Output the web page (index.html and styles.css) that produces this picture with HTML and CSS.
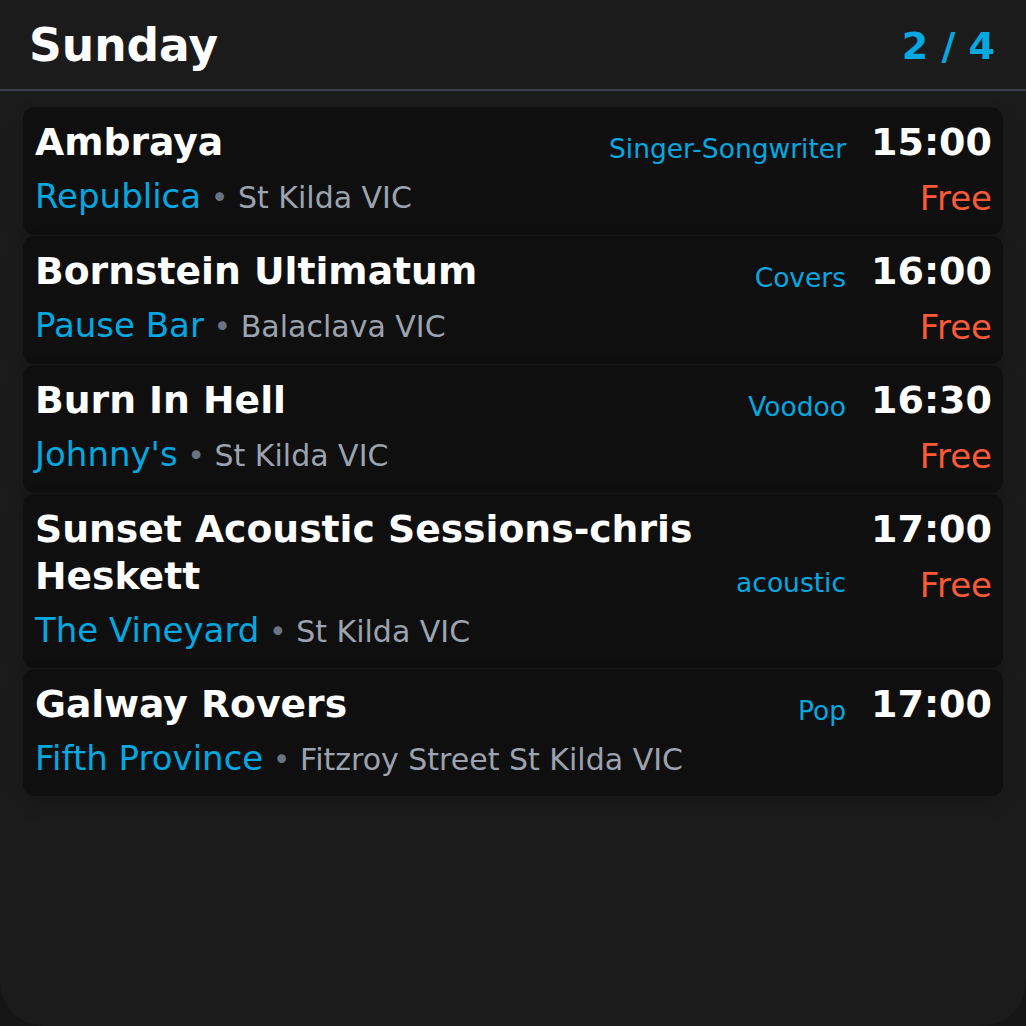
FILE: index.html
```html
<!DOCTYPE html>
<html lang="en">
<head>
<meta charset="utf-8">
<title>Sunday</title>
<link rel="stylesheet" href="styles.css">
</head>
<body>
<div class="panel">
  <header class="head">
    <h1 class="day">Sunday</h1>
    <div class="count">2 / 4</div>
  </header>
  <div class="list">
    <div class="card">
      <div class="main">
        <div class="top"><div class="title">Ambraya</div><div class="genre">Singer-Songwriter</div></div>
        <div class="venue"><span class="vname">Republica</span> <span class="dot">•</span> <span class="loc">St Kilda VIC</span></div>
      </div>
      <div class="side"><div class="time">15:00</div><div class="price">Free</div></div>
    </div>
    <div class="card">
      <div class="main">
        <div class="top"><div class="title">Bornstein Ultimatum</div><div class="genre">Covers</div></div>
        <div class="venue"><span class="vname">Pause Bar</span> <span class="dot">•</span> <span class="loc">Balaclava VIC</span></div>
      </div>
      <div class="side"><div class="time">16:00</div><div class="price">Free</div></div>
    </div>
    <div class="card">
      <div class="main">
        <div class="top"><div class="title">Burn In Hell</div><div class="genre">Voodoo</div></div>
        <div class="venue"><span class="vname">Johnny's</span> <span class="dot">•</span> <span class="loc">St Kilda VIC</span></div>
      </div>
      <div class="side"><div class="time">16:30</div><div class="price">Free</div></div>
    </div>
    <div class="card">
      <div class="main">
        <div class="top"><div class="title">Sunset Acoustic Sessions-chris Heskett</div><div class="genre">acoustic</div></div>
        <div class="venue"><span class="vname">The Vineyard</span> <span class="dot">•</span> <span class="loc">St Kilda VIC</span></div>
      </div>
      <div class="side"><div class="time">17:00</div><div class="price">Free</div></div>
    </div>
    <div class="card">
      <div class="main">
        <div class="top"><div class="title">Galway Rovers</div><div class="genre">Pop</div></div>
        <div class="venue"><span class="vname">Fifth Province</span> <span class="dot">•</span> <span class="loc">Fitzroy Street St Kilda VIC</span></div>
      </div>
      <div class="side"><div class="time">17:00</div></div>
    </div>
  </div>
</div>
</body>
</html>
```

FILE: styles.css
```css
html, body {
  margin: 0;
  padding: 0;
  background: #151515;
}
body {
  font-family: "DejaVu Sans", Verdana, sans-serif;
  color: #ffffff;
}
.panel {
  height: 1026px;
  background: #1b1b1b;
  border-radius: 0 0 44px 44px;
  overflow: hidden;
}
.head {
  display: flex;
  justify-content: space-between;
  align-items: center;
  padding: 19px 31px 16px 29px;
  border-bottom: 2px solid #3a404b;
}
.day {
  margin: 0;
  font-size: 45.5px;
  line-height: 54px;
  font-weight: bold;
  color: #ffffff;
}
.count {
  font-size: 38px;
  font-weight: bold;
  color: #04a8e0;
  line-height: 44px;
}
.list {
  display: flex;
  flex-direction: column;
  gap: 1px;
  padding: 16px 23px;
}
.card {
  display: flex;
  gap: 25px;
  background: #0f0f0f;
  border-radius: 12px;
  padding: 12px 11px 12px 12px;
  box-shadow: 0 8px 20px rgba(0, 0, 0, 0.14);
}
.main {
  flex: 1;
  min-width: 0;
}
.top {
  display: flex;
  align-items: flex-end;
  gap: 24px;
}
.title {
  flex: 1;
  font-size: 37.7px;
  line-height: 47px;
  font-weight: bold;
  color: #ffffff;
}
.genre {
  font-size: 26.5px;
  line-height: 35px;
  color: #04a8e0;
  white-space: nowrap;
}
.venue {
  margin-top: 6px;
  line-height: 49px;
  white-space: nowrap;
  font-size: 30px;
}
.vname {
  color: #04a8e0;
  font-size: 34px;
}
.dot {
  color: #6b7280;
  font-size: 30px;
}
.loc {
  color: #9ca3af;
  font-size: 30px;
}
.side {
  display: flex;
  flex-direction: column;
  align-items: flex-end;
}
.time {
  font-size: 38px;
  line-height: 47px;
  font-weight: bold;
  color: #ffffff;
}
.price {
  margin-top: 8px;
  font-size: 34px;
  line-height: 49px;
  color: #fa5a37;
}
```
